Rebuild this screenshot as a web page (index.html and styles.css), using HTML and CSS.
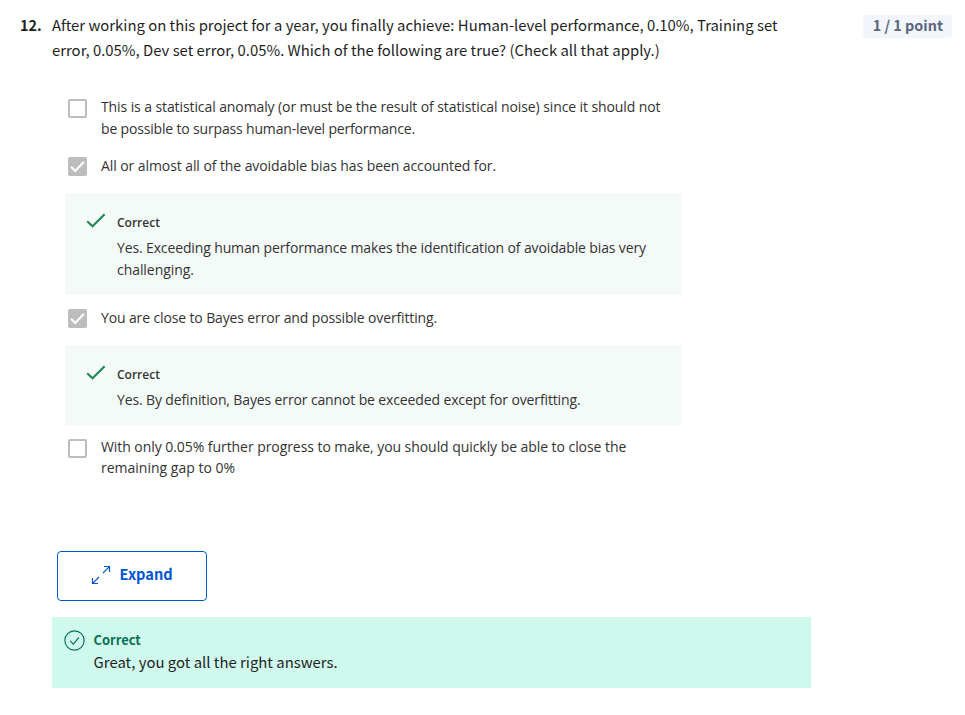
FILE: index.html
```html
<!DOCTYPE html>
<html lang="en">
<head>
<meta charset="utf-8">
<title>Quiz</title>
<link rel="stylesheet" href="styles.css">
</head>
<body>
<main class="quiz">
  <header class="question">
    <span class="number">12.</span>
    <p class="prompt">After working on this project for a year, you finally achieve: Human-level performance, 0.10%, Training set<br>error, 0.05%, Dev set error, 0.05%. Which of the following are true? (Check all that apply.)</p>
    <span class="points">1 / 1 point</span>
  </header>

  <section class="options">
    <div class="option first">
      <span class="box"></span>
      <p><span class="t3">This is a statistical anomaly (or must be the result of statistical noise) since it should not</span><br><span class="t5">be possible to surpass human-level performance.</span></p>
    </div>
    <div class="option second">
      <span class="box checked"><svg viewBox="0 0 19 19"><path d="M3 9.8 7.2 14 16 4.8"/></svg></span>
      <p class="t2">All or almost all of the avoidable bias has been accounted for.</p>
    </div>
    <div class="feedback tall">
      <svg class="tick" viewBox="0 0 20 16"><path d="M1.2 8.2 6.5 13.3 18.6 1.2"/></svg>
      <div>
        <h3>Correct</h3>
        <p><span class="t4">Yes. Exceeding human performance makes the identification of avoidable bias very</span><br><span class="t1">challenging.</span></p>
      </div>
    </div>
    <div class="option third">
      <span class="box checked"><svg viewBox="0 0 19 19"><path d="M3 9.8 7.2 14 16 4.8"/></svg></span>
      <p class="t4">You are close to Bayes error and possible overfitting.</p>
    </div>
    <div class="feedback short">
      <svg class="tick" viewBox="0 0 20 16"><path d="M1.2 8.2 6.5 13.3 18.6 1.2"/></svg>
      <div>
        <h3>Correct</h3>
        <p class="t4">Yes. By definition, Bayes error cannot be exceeded except for overfitting.</p>
      </div>
    </div>
    <div class="option fourth">
      <span class="box"></span>
      <p><span class="t1">With only 0.05% further progress to make, you should quickly be able to close the</span><br>remaining gap to 0%</p>
    </div>
  </section>

  <button class="expand" type="button">
    <svg viewBox="0 0 20 20"><path d="M12 8 18.3 1.7M13 1.5h5.5V7M8 12 1.7 18.3M1.5 13v5.5H7"/></svg>
    <span>Expand</span>
  </button>

  <section class="result">
    <svg viewBox="0 0 20 20"><circle cx="10" cy="10" r="9.2"/><path d="M5.8 10.3 8.9 13.4 14.3 7"/></svg>
    <div>
      <h2>Correct</h2>
      <p>Great, you got all the right answers.</p>
    </div>
  </section>
</main>
</body>
</html>
```
FILE: styles.css
```css
* { box-sizing: border-box; }
body { margin: 0; background: #fff; color: #1f1f1f; }
p, h2, h3 { margin: 0; white-space: nowrap; }
svg { display: block; fill: none; flex: none; }

.quiz {
  width: 965px;
  height: 715px;
  overflow: hidden;
  font-family: "Noto Sans CJK SC", sans-serif;
}

.question {
  display: flex;
  align-items: flex-start;
  height: 92px;
  padding: 12px 13px 0 20px;
  font-size: 14.89px;
  line-height: 25px;
}
.number { width: 32px; font-size: 14.4px; font-weight: 700; }
.points {
  height: 23px;
  margin: 3px 0 0 auto;
  padding: 0 9px 0 10px;
  border-radius: 4px;
  background: #f2f5fa;
  color: #5b6780;
  font-size: 14.4px;
  font-weight: 700;
  line-height: 20px;
  white-space: nowrap;
}

.options {
  width: 617px;
  height: 459px;
  margin-left: 65px;
  color: #333;
  font-family: "Open Sans", sans-serif;
  font-size: 14px;
  line-height: 22px;
}
.option { display: flex; gap: 14px; padding-left: 3px; }
.box {
  flex: none;
  width: 19px;
  height: 19px;
  margin-top: 3px;
  border: 2px solid #bdbdbd;
  border-radius: 2px;
}
.checked { margin-top: 2px; border: 0; background: #bdbdbd; }
.checked svg { width: 19px; height: 19px; stroke: #fff; stroke-width: 2; }
.first { padding-top: 4px; height: 63px; }
.second { height: 38px; }
.third { padding-top: 12px; height: 50px; }
.fourth { padding-top: 11px; line-height: 21px; }

.feedback { display: flex; gap: 11px; padding: 19px 0 0 21px; background: #f4faf8; }
.tall { height: 102px; }
.short { height: 80px; }
.tick { width: 20px; height: 16px; margin-top: 1px; stroke: #1f8354; stroke-width: 2; }
.feedback h3 { font-size: 12px; font-weight: 600; line-height: 22px; }
.feedback p { margin-top: 3px; }

.t1 { letter-spacing: -0.06px; }
.t2 { letter-spacing: -0.08px; }
.t3 { letter-spacing: -0.095px; }
.t4 { letter-spacing: -0.13px; }
.t5 { letter-spacing: -0.168px; }

.expand {
  display: flex;
  align-items: center;
  gap: 9px;
  width: 150px;
  height: 50px;
  margin-left: 57px;
  padding: 0 0 3px 33px;
  border: 1px solid #0056d2;
  border-radius: 4px;
  background: #fff;
  color: #0056d2;
  font: 700 14.6px/20px "Noto Sans CJK SC", sans-serif;
}
.expand span { margin: -1px 0 0 -0.4px; }
.expand svg { width: 20px; height: 20px; margin-top: 1px; stroke: #0056d2; stroke-width: 1.2; }

.result {
  display: flex;
  gap: 8.6px;
  width: 759px;
  height: 71px;
  margin: 16px 0 0 52px;
  padding: 13px 0 0 12px;
  background: #d0f9ed;
}
.result svg { width: 21px; height: 21px; stroke: #087051; stroke-width: 1.1; }
.result h2 { color: #087051; font-size: 12.9px; line-height: 20px; }
.result p { margin-top: -1px; font-size: 14.89px; line-height: 25px; }
```
